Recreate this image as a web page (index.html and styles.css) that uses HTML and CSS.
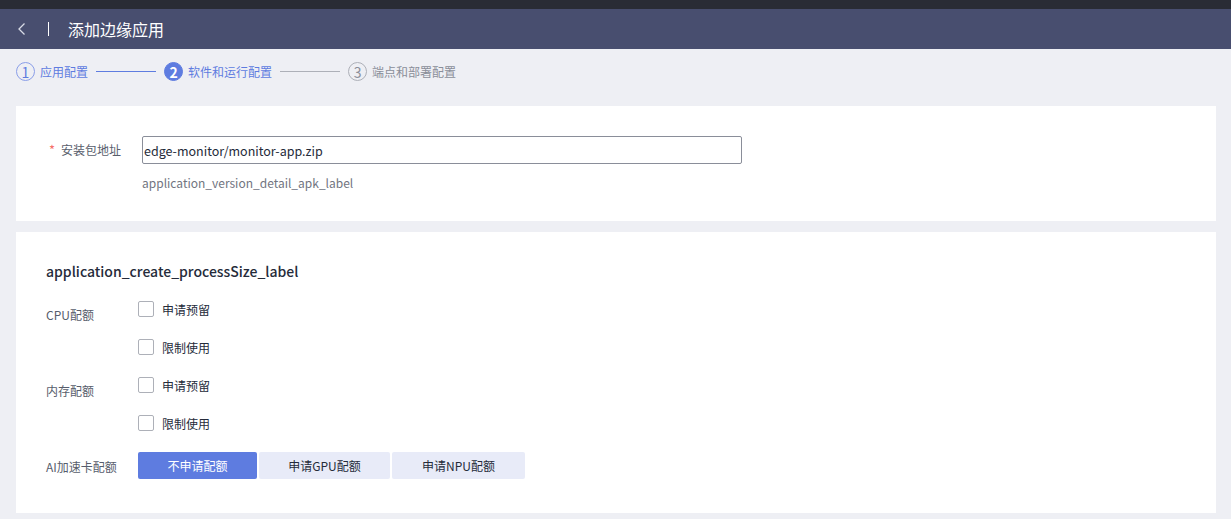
FILE: index.html
```html
<!DOCTYPE html>
<html lang="zh-CN">
<head>
    <meta charset="UTF-8">
    <meta name="viewport" content="width=device-width, initial-scale=1.0">
    <title>添加边缘应用</title>
    <link rel="stylesheet" href="styles.css">
</head>
<body>
    <div class="topbar"></div>
    <div class="header">
        <span class="back">
            <svg width="10" height="14" viewBox="0 0 10 14"><path d="M7.5 1.5 L2 7 L7.5 12.5" fill="none" stroke="#d8dbe6" stroke-width="1.3"/></svg>
        </span>
        <span class="divider"></span>
        <h1>添加边缘应用</h1>
    </div>

    <div class="steps">
        <div class="step done"><span class="num">1</span>应用配置</div>
        <span class="line active"></span>
        <div class="step current"><span class="num">2</span>软件和运行配置</div>
        <span class="line"></span>
        <div class="step todo"><span class="num">3</span>端点和部署配置</div>
    </div>

    <div class="card card-pkg">
        <div class="field">
            <label class="field-label"><span class="required">*</span>安装包地址</label>
            <div class="field-body">
                <input class="text-input" type="text" value="edge-monitor/monitor-app.zip">
                <div class="hint">application_version_detail_apk_label</div>
            </div>
        </div>
    </div>

    <div class="card card-size">
        <h2>application_create_processSize_label</h2>

        <div class="quota">
            <div class="quota-label">CPU配额</div>
            <div class="options">
                <label class="check"><span class="box"></span>申请预留</label>
                <label class="check"><span class="box"></span>限制使用</label>
            </div>
        </div>

        <div class="quota">
            <div class="quota-label">内存配额</div>
            <div class="options">
                <label class="check"><span class="box"></span>申请预留</label>
                <label class="check"><span class="box"></span>限制使用</label>
            </div>
        </div>

        <div class="quota quota-ai">
            <div class="quota-label">AI加速卡配额</div>
            <div class="tabs">
                <button class="tab selected">不申请配额</button>
                <button class="tab">申请GPU配额</button>
                <button class="tab wide">申请NPU配额</button>
            </div>
        </div>
    </div>
</body>
</html>
```

FILE: styles.css
```css
body {
    margin: 0;
    background: #eeeff4;
    font-family: "Noto Sans CJK SC", "Noto Sans", sans-serif;
    font-size: 12px;
    color: #252b3a;
}
.topbar {
    height: 9px;
    background: #292c35;
}
.header {
    height: 40px;
    background: #484e6f;
    display: flex;
    align-items: center;
    padding-left: 17px;
}
.back {
    display: flex;
    width: 10px;
}
.divider {
    width: 1px;
    height: 14px;
    background: #fff;
    margin: 0 19px 0 21px;
}
.header h1 {
    margin: 0;
    font-size: 16px;
    font-weight: normal;
    color: #fff;
}
.steps {
    display: flex;
    align-items: center;
    height: 45px;
    padding: 0 16px;
    margin-bottom: 12px;
}
.step {
    display: flex;
    align-items: center;
    font-size: 12px;
}
.step .num {
    width: 17px;
    height: 17px;
    border-radius: 50%;
    border: 1px solid;
    display: flex;
    align-items: center;
    justify-content: center;
    font-size: 14px;
    margin-right: 5px;
}
.step.done { color: #5e7ce0; }
.step.done .num { border-color: #8a9ee8; }
.step.current { color: #5e7ce0; }
.step.current .num {
    background: #5e7ce0;
    border-color: #5e7ce0;
    color: #fff;
    font-weight: bold;
}
.step.todo { color: #8a8e99; }
.step.todo .num { border-color: #adb0b8; color: #8a8e99; }
.line {
    width: 60px;
    height: 1px;
    background: #adb0b8;
    margin: 0 8px;
}
.line.active { background: #5e7ce0; }
.card {
    background: #fff;
    margin: 0 15px 11px 16px;
}
.card-pkg {
    height: 115px;
    box-sizing: border-box;
    padding: 30px 0 0 30px;
}
.field {
    display: flex;
}
.field-label {
    width: 96px;
    height: 27px;
    display: flex;
    align-items: center;
    color: #575d6c;
}
.required {
    color: #f66f6a;
    margin: 0 6px 0 3px;
    font-size: 13px;
}
.text-input {
    width: 600px;
    height: 28px;
    box-sizing: border-box;
    border: 1px solid #8a8e99;
    border-radius: 2px;
    padding: 0 1px;
    font-family: inherit;
    font-size: 12.5px;
    color: #252b3a;
    outline: none;
}
.hint {
    margin-top: 10px;
    color: #71757f;
}
.card-size {
    height: 281px;
    box-sizing: border-box;
    padding: 29px 0 0 30px;
}
.card-size h2 {
    margin: 0 0 17px;
    font-size: 14px;
    font-weight: 500;
    line-height: 20px;
}
.quota {
    display: flex;
}
.quota-label {
    width: 92px;
    color: #575d6c;
    padding-top: 8px;
}
.options {
    display: flex;
    flex-direction: column;
}
.check {
    display: flex;
    align-items: center;
    height: 16px;
    margin: 3px 0 19px;
}
.box {
    width: 14px;
    height: 14px;
    border: 1px solid #adb0b8;
    border-radius: 2px;
    margin-right: 8px;
}
.quota-ai {
    align-items: center;
    margin-top: 2px;
}
.quota-ai .quota-label {
    padding-top: 2px;
}
.tabs {
    display: flex;
    gap: 2px;
}
.tab {
    height: 27px;
    width: 119px;
    border: none;
    border-radius: 2px;
    background: #e8ebf8;
    color: #252b3a;
    font-family: inherit;
    font-size: 12px;
    padding: 0;
}
.tab + .tab { width: 131px; }
.tab.wide { width: 133px; }
.tab.selected {
    background: #5e7ce0;
    color: #fff;
}
```
